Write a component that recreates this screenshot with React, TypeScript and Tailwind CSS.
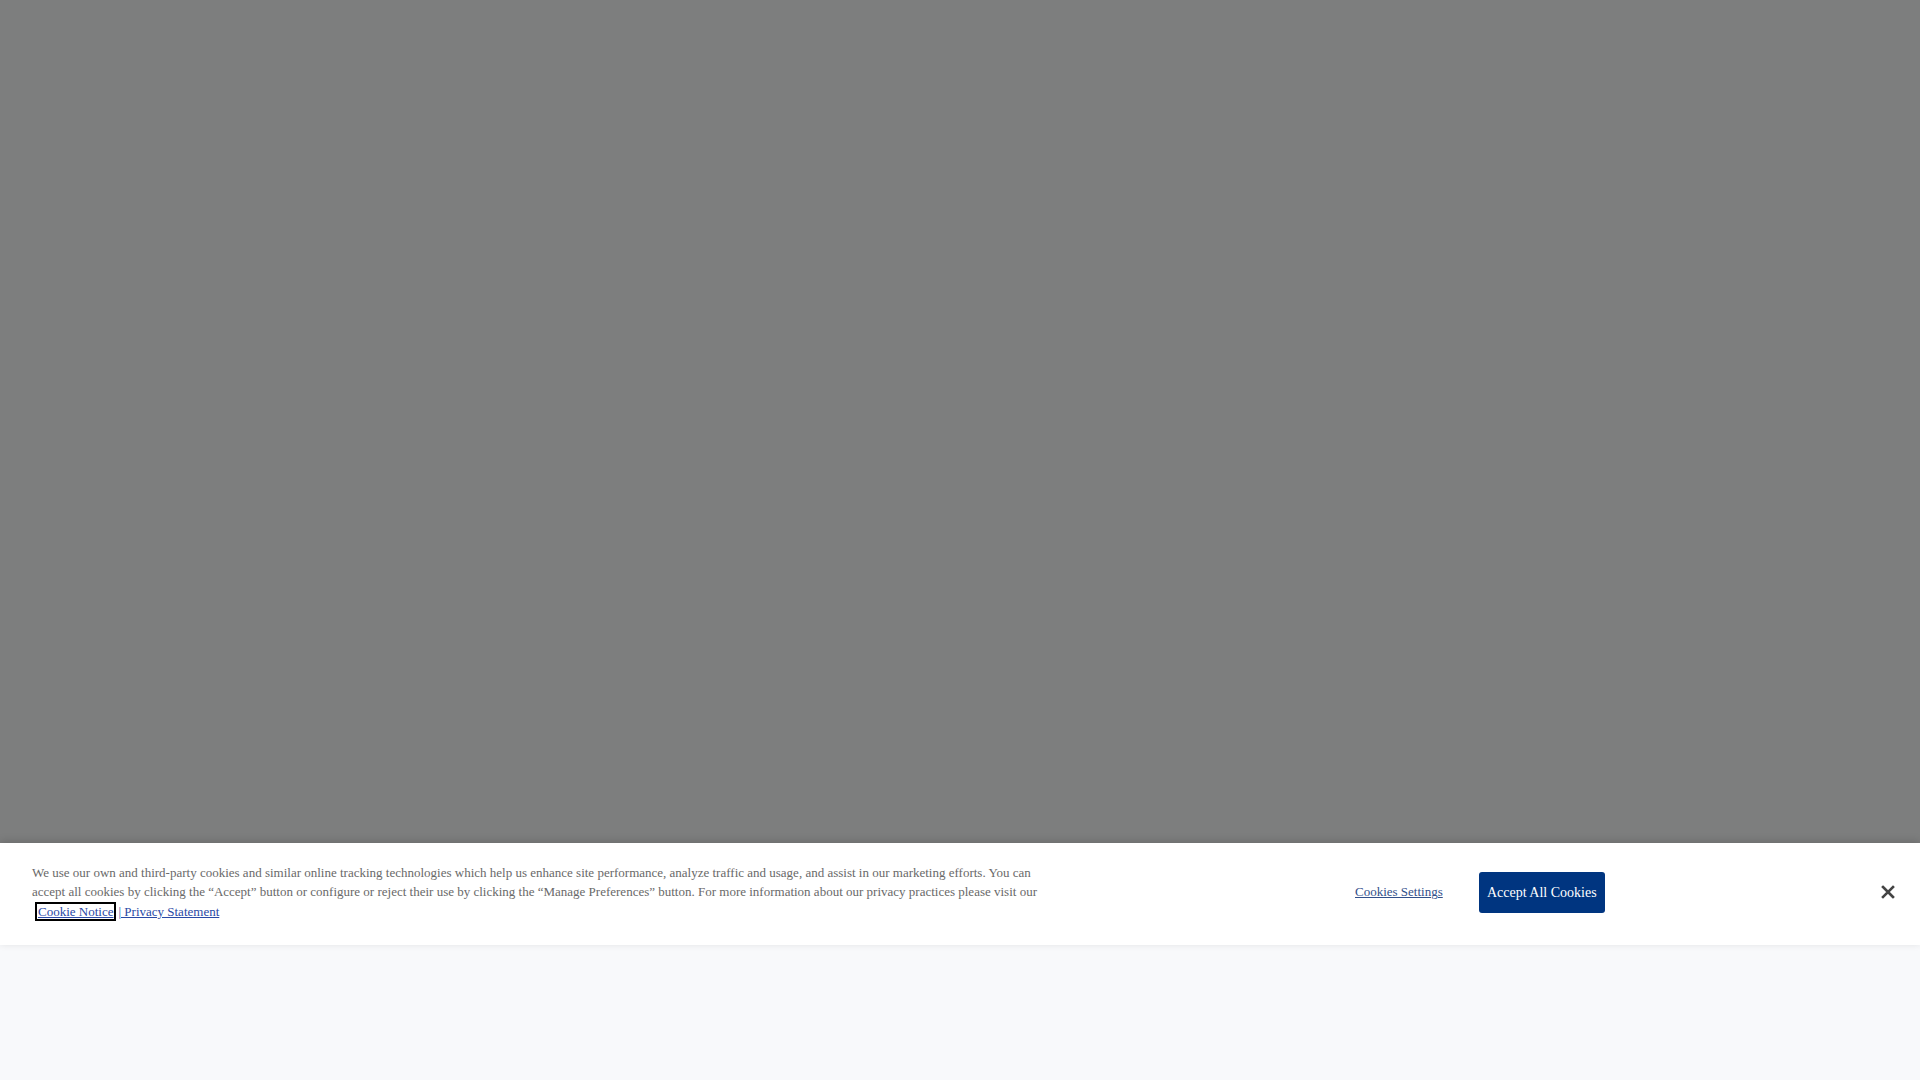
import React from 'react';

const serif = { fontFamily: '"Liberation Serif", "Times New Roman", serif' };

function CookieBanner() {
  return (
    <div
      className="relative z-10 flex h-[102px] w-full items-center bg-white pb-[4px] shadow-[0_-2px_8px_rgba(0,0,0,0.15)]"
      style={serif}
    >
      {/* Policy text */}
      <div className="w-[1050px] shrink-0 pl-8 text-[13px] leading-[19.5px] text-[#696969]">
        <p>
          We use our own and third-party cookies and similar online tracking technologies which help us enhance site
          performance, analyze traffic and usage, and assist in our marketing efforts. You can accept all cookies by
          clicking the “Accept” button or configure or reject their use by clicking the “Manage Preferences” button. For
          more information about our privacy practices please visit our{' '}
          <a
            href="#"
            className="ml-[3px] inline-block border-2 border-black px-[1px] leading-[15px] text-[#2a4aa6] underline"
          >
            Cookie Notice
          </a>
          <a href="#" className="ml-[2px] text-[#2a4aa6] underline">
            | Privacy Statement
          </a>
        </p>
      </div>

      {/* Actions */}
      <div className="ml-[305px] flex items-center">
        <button className="text-[13px] text-[#32508a] underline">Cookies Settings</button>
        <button className="ml-[36px] h-[41px] w-[126px] rounded-[3px] bg-[#003580] text-[14px] text-white">
          Accept All Cookies
        </button>
      </div>

      <button className="ml-auto mr-[17px] flex h-[30px] w-[30px] items-center justify-center" aria-label="Close">
        <svg width="14" height="14" viewBox="0 0 14 14">
          <path d="M2 2 L12 12 M12 2 L2 12" stroke="#444" strokeWidth="2.6" strokeLinecap="square" />
        </svg>
      </button>
    </div>
  );
}

export default function App() {
  return (
    <div className="flex h-screen w-full flex-col overflow-hidden bg-[#f8f9fb]">
      {/* dimmed page */}
      <div className="h-[843px] w-full shrink-0 bg-[#7d7e7e]" />
      <CookieBanner />
      <div className="flex-1 bg-[#f8f9fb]" />
    </div>
  );
}
